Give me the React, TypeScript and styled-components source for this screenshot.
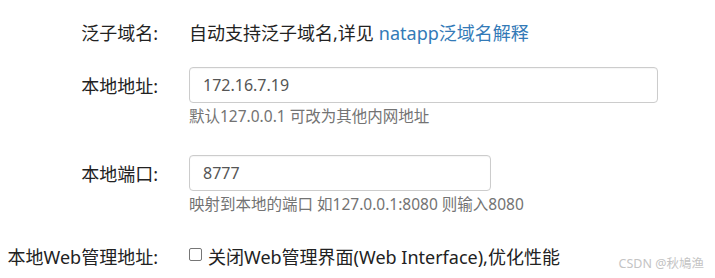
import React from "react";
import styled, { createGlobalStyle } from "styled-components";

const Global = createGlobalStyle`
  html, body { margin: 0; padding: 0; background: #fff; }
  body {
    font-family: "Segoe UI", "Noto Sans", "Noto Sans CJK SC", sans-serif;
    color: #333;
  }
  * { box-sizing: border-box; }
`;

const Page = styled.div`
  position: relative;
  width: 715px;
  height: 278px;
  padding-top: 15px;
  overflow: hidden;
  font-family: "Noto Sans", "Noto Sans CJK SC", sans-serif;
`;

const Row = styled.div<{ $mt: number }>`
  display: grid;
  grid-template-columns: 172px 1fr;
  margin-top: ${(p) => p.$mt}px;
`;

const Label = styled.div<{ $h: number }>`
  height: ${(p) => p.$h}px;
  display: flex;
  align-items: center;
  justify-content: flex-end;
  padding-right: 14px;
  font-size: 18px;
  color: #222;
  white-space: nowrap;
`;

const Control = styled.div`
  padding-left: 17px;
  display: flex;
  flex-direction: column;
`;

const Static = styled.div<{ $h: number }>`
  height: ${(p) => p.$h}px;
  display: flex;
  align-items: center;
  font-size: 18px;
  color: #222;
  white-space: nowrap;
`;

const Link = styled.a`
  color: #337ab7;
  text-decoration: none;
  margin-left: 5px;
`;

const Input = styled.input<{ $w: number }>`
  width: ${(p) => p.$w}px;
  height: 36px;
  border: 1px solid #ccc;
  border-radius: 4px;
  padding: 0 13px;
  font-family: "Noto Sans", "Noto Sans CJK SC", sans-serif;
  font-size: 16px;
  color: #555;
  outline: none;
  box-shadow: inset 0 1px 1px rgba(0, 0, 0, 0.04);
`;

const Help = styled.div`
  margin-top: 4px;
  line-height: 18px;
  font-size: 15.5px;
  color: #737373;
  white-space: nowrap;
`;

const CheckLabel = styled.label`
  display: flex;
  align-items: center;
  gap: 6px;
  font-size: 18px;
  color: #222;
  white-space: nowrap;
  height: 24px;
`;

const Box = styled.span`
  display: inline-block;
  width: 13px;
  height: 13px;
  border: 1px solid #767676;
  border-radius: 2px;
  background: #fff;
  margin-top: -4px;
`;

const Watermark = styled.div`
  position: absolute;
  right: 11px;
  bottom: 6px;
  font-size: 12.5px;
  color: #c4c4c4;
  font-family: "Noto Sans", "Noto Sans CJK SC", sans-serif;
`;

export default function App() {
  return (
    <>
      <Global />
      <Page>
        <Row $mt={0}>
          <Label $h={34}>泛子域名:</Label>
          <Control>
            <Static $h={34}>
              自动支持泛子域名,详见<Link href="#">natapp泛域名解释</Link>
            </Static>
          </Control>
        </Row>
        <Row $mt={18}>
          <Label $h={36}>本地地址:</Label>
          <Control>
            <Input $w={469} defaultValue="172.16.7.19" />
            <Help>默认127.0.0.1 可改为其他内网地址</Help>
          </Control>
        </Row>
        <Row $mt={30}>
          <Label $h={36}>本地端口:</Label>
          <Control>
            <Input $w={302} defaultValue="8777" />
            <Help>映射到本地的端口 如127.0.0.1:8080 则输入8080</Help>
          </Control>
        </Row>
        <Row $mt={31}>
          <Label $h={24}>本地Web管理地址:</Label>
          <Control>
            <CheckLabel>
              <Box />
              关闭Web管理界面(Web Interface),优化性能
            </CheckLabel>
          </Control>
        </Row>
        <Watermark>CSDN @秋鳩渔</Watermark>
      </Page>
    </>
  );
}
